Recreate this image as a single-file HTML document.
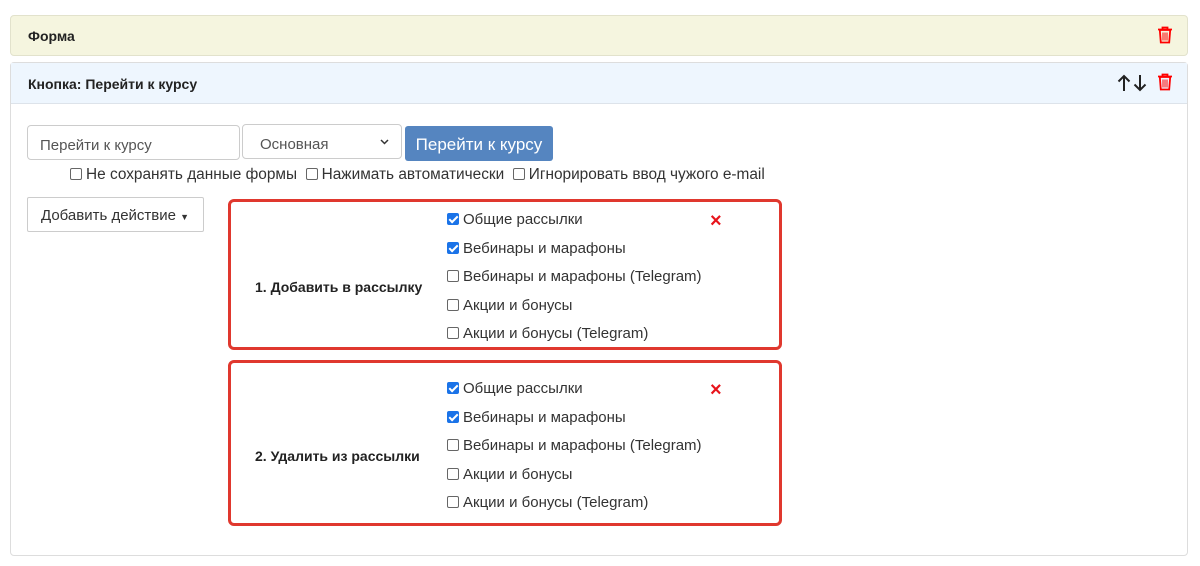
<!DOCTYPE html>
<html><head><meta charset="utf-8"><style>
*{box-sizing:border-box}
body{margin:0;width:1200px;height:566px;background:#fff;font-family:"Liberation Sans","DejaVu Sans",sans-serif;color:#222;position:relative;overflow:hidden}
.abs{position:absolute}
.p1{left:10px;top:15px;width:1178px;height:41px;background:#f5f5df;border:1px solid #e2e2cc;border-radius:4px}
.p2{left:10px;top:62px;width:1178px;height:494px;border:1px solid #ddd;border-radius:4px}
.h2{left:0;top:0;width:1176px;height:41px;background:#eef6fe;border-bottom:1px solid #dde3ea}
.t{font-size:14px;font-weight:bold;color:#222}
.inp{border:1px solid #ccc;border-radius:4px;height:35px;font-size:15px;color:#555;padding:11px 12px 0}
.cb{display:inline-block;width:12px;height:12px;border:1px solid #666;border-radius:2px;vertical-align:-1px;margin-right:4px;background:#fff}
.cb.on{background:#1a73e8;border-color:#1a73e8;position:relative}
.cb.on:after{content:"";position:absolute;left:3px;top:0px;width:3px;height:7px;border:solid #fff;border-width:0 2px 2px 0;transform:rotate(45deg)}
.row{font-size:15px;color:#333}
.box{border:3px solid #e0382e;border-radius:6px}
.x{color:#e8141c;font-size:20px;font-weight:bold}
</style></head><body>
<div class="abs p1"><div class="abs t" style="left:17px;top:12px">Форма</div>
<svg class="abs" style="left:1146px;top:10px" width="16" height="18" viewBox="0 0 16 18"><path d="M1 3.5h14M5.5 3V1.5h5V3M2.8 4l1 12.5h8.4l1-12.5z" fill="none" stroke="#f00" stroke-width="1.8"/><path d="M6 6.5v8M8 6.5v8M10 6.5v8" stroke="#f00" stroke-width="1"/></svg></div>
<div class="abs p2">
<div class="abs h2"><div class="abs t" style="left:17px;top:13px">Кнопка: Перейти к курсу</div>
<svg class="abs" style="left:1106px;top:11px" width="31" height="18" viewBox="0 0 31 18"><path d="M7 17V2M1.5 7.5L7 2l5.5 5.5M23 1v15M17.5 10.5L23 16l5.5-5.5" fill="none" stroke="#222" stroke-width="2"/></svg>
<svg class="abs" style="left:1146px;top:10px" width="16" height="18" viewBox="0 0 16 18"><path d="M1 3.5h14M5.5 3V1.5h5V3M2.8 4l1 12.5h8.4l1-12.5z" fill="none" stroke="#f00" stroke-width="1.8"/><path d="M6 6.5v8M8 6.5v8M10 6.5v8" stroke="#f00" stroke-width="1"/></svg></div>
</div>
<div class="abs inp" style="left:27px;top:125px;width:213px">Перейти к курсу</div>
<div class="abs inp" style="left:242px;top:124px;width:160px;padding-left:17px">Основная<svg class="abs" style="right:12px;top:14px" width="9" height="6" viewBox="0 0 9 6"><path d="M1 1l3.5 3.5L8 1" fill="none" stroke="#333" stroke-width="1.5"/></svg></div>
<div class="abs" style="left:405px;top:126px;width:148px;height:35px;background:#5585c0;border-radius:3px;color:#fff;font-size:17px;text-align:center;line-height:37px">Перейти к курсу</div>
<div class="abs row" style="left:70px;top:166px;font-size:15.4px"><span class="cb"></span>Не сохранять данные формы &nbsp;<span class="cb"></span>Нажимать автоматически &nbsp;<span class="cb"></span>Игнорировать ввод чужого e-mail</div>
<div class="abs" style="left:27px;top:197px;width:177px;height:35px;border:1px solid #ccc;border-radius:2px;font-size:15px;color:#333;padding:9px 13px">Добавить действие <span style="font-size:9px">&#9660;</span></div>

<div class="abs box" style="left:228px;top:199px;width:554px;height:151px"></div>
<div class="abs t" style="left:255px;top:279px;font-size:14px">1. Добавить в рассылку</div>
<div class="abs row" style="left:447px;top:206px;line-height:28.5px"><span class="cb on"></span>Общие рассылки<br><span class="cb on"></span>Вебинары и марафоны<br><span class="cb"></span>Вебинары и марафоны (Telegram)<br><span class="cb"></span>Акции и бонусы<br><span class="cb"></span>Акции и бонусы (Telegram)</div>
<div class="abs x" style="left:710px;top:210px">×</div>

<div class="abs box" style="left:228px;top:360px;width:554px;height:166px"></div>
<div class="abs t" style="left:255px;top:448px;font-size:14px">2. Удалить из рассылки</div>
<div class="abs row" style="left:447px;top:375px;line-height:28.5px"><span class="cb on"></span>Общие рассылки<br><span class="cb on"></span>Вебинары и марафоны<br><span class="cb"></span>Вебинары и марафоны (Telegram)<br><span class="cb"></span>Акции и бонусы<br><span class="cb"></span>Акции и бонусы (Telegram)</div>
<div class="abs x" style="left:710px;top:379px">×</div>
</body></html>
